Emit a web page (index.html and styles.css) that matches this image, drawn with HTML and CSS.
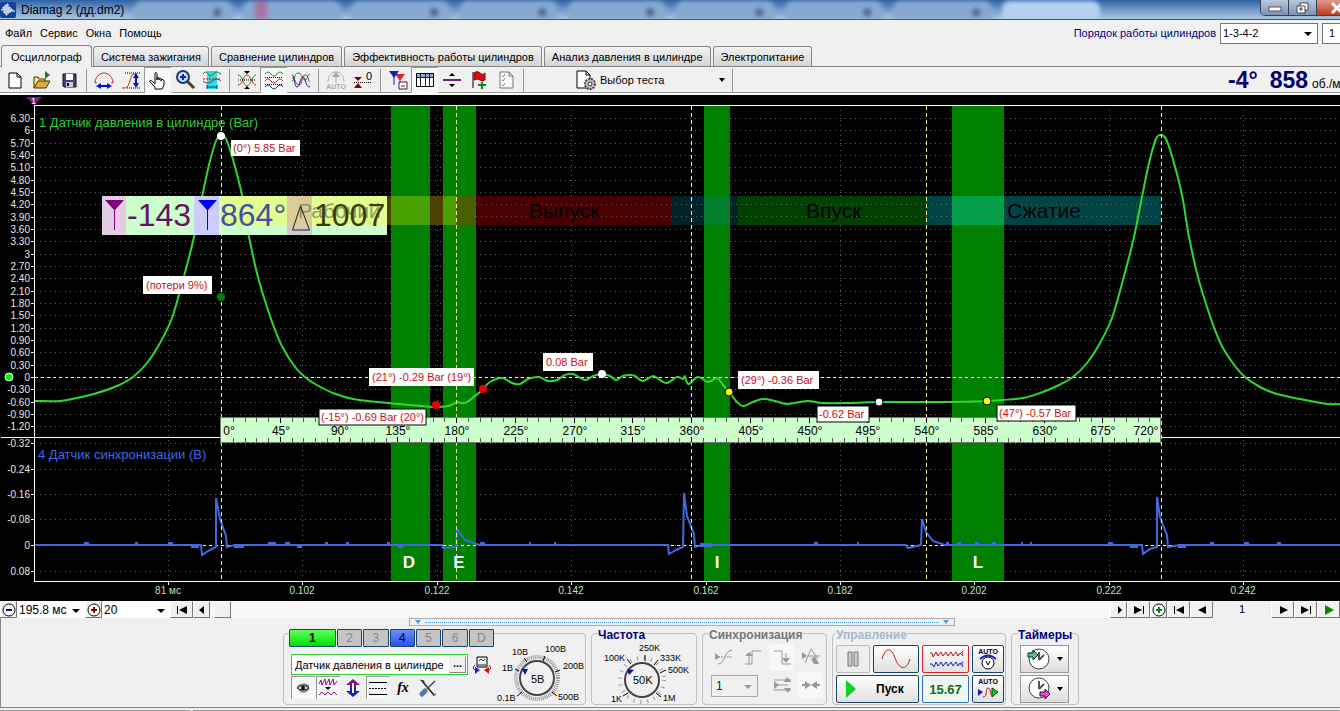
FILE: index.html
```html
<!DOCTYPE html>
<html lang="ru">
<head>
<meta charset="utf-8">
<title>Diamag 2 (дд.dm2)</title>
<link rel="stylesheet" href="styles.css">
</head>
<body>
<header class="titlebar">
  <svg class="app-logo" viewBox="0 0 16 16"><rect width="16" height="16" rx="2" fill="#12409c"/><path d="M1 8h2V5h1v6h1V3h1v10h1V2h1v9h1V5h1v5h1V7h1v2h3" fill="none" stroke="#fff"/></svg>
  <h1>Diamag 2 (дд.dm2)</h1>
  <div class="glass"><i></i><i class="rose"></i><i></i><i></i><i></i><i></i><i></i><i></i><i class="bright"></i></div>
  <div class="win-buttons">
    <button aria-label="Свернуть"><svg viewBox="0 0 14 12"><rect x="1" y="5" width="12" height="4" fill="#fff" stroke="#555"/></svg></button>
    <button aria-label="Развернуть"><svg viewBox="0 0 14 12"><path d="M4 1h8v7H9v3H1V4h3z" fill="#fff" stroke="#445"/><path d="M4 4h5v4M4 6h2v2H4z" fill="none" stroke="#445"/></svg></button>
    <button class="close" aria-label="Закрыть"><svg viewBox="0 0 14 12"><path d="M2 1l10 10M12 1L2 11" stroke="#fff" stroke-width="3"/></svg></button>
  </div>
</header>
<div class="menubar">
  <nav><a href="#">Файл</a><a href="#">Сервис</a><a href="#">Окна</a><a href="#">Помощь</a></nav>
  <div class="order">
    <label for="order">Порядок работы цилиндров</label>
    <span class="combo order-list"><select id="order"><option>1-3-4-2</option></select></span>
    <input class="cyl" value="1" aria-label="Цилиндр">
  </div>
</div>
<div class="tabs" role="tablist">
  <button role="tab" class="active">Осциллограф</button><button role="tab">Система зажигания</button><button role="tab">Сравнение цилиндров</button><button role="tab">Эффективность работы цилиндров</button><button role="tab">Анализ давления в цилиндре</button><button role="tab">Электропитание</button>
</div>
<div class="toolbar">
  <button aria-label="Новый"><svg viewBox="0 0 20 20"><path d="M4 3h8l4 4v11H4zM12 3v4h4" fill="#fff" stroke="#000"/></svg></button>
  <button aria-label="Открыть"><svg viewBox="0 0 20 20"><path d="M2 18V7h4l1 2h6v3" fill="#ffe08a" stroke="#443000"/><path d="M2 18l4-7h12l-4 7z" fill="#d8b040" stroke="#443000"/><path d="M13 1l5 4-5 4z" fill="#0a8a0a"/></svg></button>
  <button aria-label="Сохранить"><svg viewBox="0 0 20 20"><path d="M4 4h13v13H5l-1-1z" fill="#44447c" stroke="#111"/><path d="M7 4h7v6H7z" fill="#fff"/><path d="M7 12h7v5H7z" fill="#ccc"/><path d="M8 13h2v3H8z" fill="#111"/></svg></button>
  <i class="sep"></i>
  <button aria-label="Период"><svg viewBox="0 0 20 20"><path d="M1 13C1 8 5 3 10 3s9 5 9 10h-2M1 13h2" fill="none" stroke="#e02020"/><path d="M4 16h12" stroke="#00c" stroke-width="2"/><path d="M2 16l5-3v6zM18 16l-5-3v6z" fill="#0018c0"/></svg></button>
  <button aria-label="Амплитуда"><svg viewBox="0 0 20 20"><path d="M1 18h3c5 0 5-14 9-14h3" fill="none" stroke="#e02020"/><path d="M4 3h16M6 18h14" stroke="#000" stroke-dasharray="1 1"/><path d="M15 5v11" stroke="#0018c0" stroke-width="2"/><path d="M15 3l-3 5h6zM15 18l-3-5h6z" fill="#0018c0"/></svg></button>
  <button class="on" aria-label="Рука"><svg viewBox="0 0 20 20"><path d="M7 19v-2l-5-5c-1-2 1-2 2-1l3 3V4c0-2 2-2 2 0v6 -2c0-1 2-1 2 0v2-1c0-1 2-1 2 0v2-1c0-1 3-1 3 1v4l-2 4z" fill="#fff" stroke="#000"/></svg></button>
  <button aria-label="Лупа"><svg viewBox="0 0 20 20"><path d="M12 11l7 7" stroke="#543c20" stroke-width="3"/><circle cx="8" cy="7" r="6" fill="#cdf" stroke="#223868" stroke-width="2"/><path d="M8 4v6M5 7h6" stroke="#0020d0" stroke-width="2"/></svg></button>
  <button aria-label="Участок"><svg viewBox="0 0 20 20"><path d="M5 1h10v18H5z" fill="#28dce8"/><path d="M1 4q3-4 5 0t5 0 8 0" fill="none" stroke="#088020"/><path d="M1 9h18" stroke="#d01010" stroke-dasharray="2 1"/><path d="M1 11q4 4 9 0t9 0" fill="none" stroke="#803030"/><path d="M5 17h10M5 15v4M15 15v4" stroke="#004090"/></svg></button>
  <i class="sep"></i>
  <button aria-label="Совместить"><svg viewBox="0 0 20 20"><path d="M1 5c5 0 5 11 9 11s5-11 9-11" fill="none" stroke="#109010"/><path d="M1 15c5 0 5-10 9-10s5 10 9 10" fill="none" stroke="#d02020"/><path d="M1 10h18" stroke="#000" stroke-dasharray="1 1"/><path d="M10 4L7 1h6zM10 16l-3 3h6z"/></svg></button>
  <button class="on" aria-label="Разделить"><svg viewBox="0 0 20 20"><path d="M1 4q3-4 6 0t6 0 6 0" fill="none" stroke="#109010"/><path d="M1 11q3-4 6 0t6 0 6 0" fill="none" stroke="#d02020"/><path d="M1 17q3-4 6 0t6 0 6 0" fill="none" stroke="#1020c0"/><path d="M1 7.500h18M1 14.500h18" stroke="#000" stroke-dasharray="1 1"/></svg></button>
  <button aria-label="Наложить"><svg viewBox="0 0 20 20"><path d="M1 11c3 0 2-8 6-8s4 7 7 7 2-6 5-6" fill="none" stroke="#109010"/><path d="M1 8c4 0 3 7 7 7s2-10 6-10 3 7 5 7" fill="none" stroke="#d02020"/><path d="M1 5c3 0 2 12 5 12S9 7 12 7s2 10 7 10" fill="none" stroke="#1020c0"/></svg></button>
  <i class="sep"></i>
  <button disabled aria-label="Авто"><svg viewBox="0 0 20 20"><path d="M2 12C2 5 6 2 10 2s8 3 8 10M10 13V5" fill="none" stroke="#aaa"/><path d="M10 2L6 7h8z" fill="#aaa"/><text x="10" y="19" class="tiny gray">AUTO</text></svg></button>
  <button aria-label="Ноль"><svg viewBox="0 0 20 20"><path d="M1 12.500h18" stroke="#000" stroke-dasharray="1 1"/><path d="M1 7h8l-4 4zM1 18h8l-4-5z" fill="#800000"/><text x="16" y="10" class="small">0</text></svg></button>
  <i class="sep"></i>
  <button aria-label="Маркеры"><svg viewBox="0 0 20 20"><path d="M7 4h10l-5 7z" fill="#d03030"/><path d="M12 10v6" stroke="#d03030"/><path d="M1 1h10L6 8z" fill="#1020c0"/><path d="M6 7v8" stroke="#1020c0"/><path d="M11 12h8v7h-8z" fill="#fff" stroke="#423"/><path d="M13 16h4" stroke="#423"/></svg></button>
  <button class="on" aria-label="Таблица"><svg viewBox="0 0 20 20"><path d="M1.500 3.500h17v13h-17z" fill="#fff" stroke="#000"/><path d="M2 4h16v3H2z" fill="#8aa8d8"/><path d="M2 7.500h16M5.500 4v12M10.500 4v12M14.500 4v12" stroke="#123"/></svg></button>
  <button aria-label="Линия"><svg viewBox="0 0 20 20"><path d="M1 10h18" stroke="#702080" stroke-width="2"/><path d="M7 6l3-3 3 3zM7 14h6l-3 3z"/></svg></button>
  <button aria-label="Флаг"><svg viewBox="0 0 20 20"><path d="M4 2v16" stroke="#000"/><path d="M5 3q3-3 6 0t5 0v7q-3 2-5 0t-6 0z" fill="#d80c18" stroke="#800"/><path d="M13 12v7M9 15h8" stroke="#088a10" stroke-width="2"/></svg></button>
  <button aria-label="Список"><svg viewBox="0 0 20 20"><path d="M4 2h9l4 4v12H4zM13 2v4h4" fill="#f8f8f8" stroke="#777"/><path d="M6 6l1 1 2-3M6 10l1 1 2-3M6 15l1 1 2-3" fill="none" stroke="#888"/></svg></button>
  <i class="sep"></i>
  <button class="test"><svg viewBox="0 0 20 20"><path d="M1 1h9l4 4v13H1zM10 1v4h4" fill="#fff" stroke="#000"/><circle cx="14" cy="14" r="5" fill="#ccc" stroke="#444" stroke-width="2" stroke-dasharray="2 1"/><circle cx="14" cy="14" r="2" fill="#fff" stroke="#222"/></svg><span>Выбор теста</span><b class="down"></b></button>
  <i class="sep"></i>
  <output class="readout"><b>-4°</b><b>858</b><span>об./м</span></output>
</div>
<main class="scope">
<svg id="chart" viewBox="0 95 1340 506" role="img" aria-label="Осциллограмма">
  <rect y="95" width="1340" height="506"/>
  <g id="grid" class="grid"></g>
  <g fill="#008000"><path d="M391 106h39v475h-39zM443 106h33v475h-33zM704 106h26v475h-26zM952 106h52v475h-52z"/></g>
  <g>
    <path d="M387 196h69v29h-69z" fill="#4a4000"/><path d="M391 196h39v29h-39zM443 196h13v29h-13z" fill="#48a000"/>
    <path d="M456 196h20v29h-20z" fill="#4a6000"/><path d="M476 196h195v29H476z" fill="#480000"/>
    <path d="M671 196h67v29h-67z" fill="#002228"/><path d="M704 196h26v29h-26z" fill="#00802a"/>
    <path d="M738 196h188v29H738z" fill="#004000"/><path d="M926 196h235v29H926z" fill="#004444"/><path d="M952 196h52v29h-52z" fill="#00a048"/>
  </g>
  <g id="grid2" class="grid"></g>
  <g class="stroke-name"><text x="529" y="218">Выпуск</text><text x="806" y="218">Впуск</text><text x="1007" y="218">Сжатие</text></g>
  <path d="M35 377.500H1340M35 545.500H1340" stroke="#fff" stroke-dasharray="3 3"/>
  <path d="M34 105.500H1340M34.500 105V582M34 581.500H1340M1 437.500H1340" stroke="#fff"/>
  <g id="axes" class="axis"></g>
  <path id="pressure" class="pressure"/>
  <path class="sync" d="M35 545H201L202 555 208 551 216 547V498L220 519 226 536 227 547 235 545 442 545 443 548 456 547 457 529 465 540 476 544 480 545 668 545 669 554 676 550 683 547 684 493 687 516 694 534 695 547 702 545H906L908 548 921 545 922 519 926 532 933 541 945 545H1142L1143 554 1150 549 1157 547V497L1160 517 1167 535 1168 547 1180 545H1340"/>
  <path class="noise" d="M84 544h5M135 544h3M168 544h5M191 546h8M234 546h10M268 544h8M285 544h5M297 546h5M325 544h3M346 544h3M387 544h3M398 546h5M480 544h5M529 544h2M554 544h2M700 545h12M814 544h4M857 544h2M946 544h3M957 544h4M975 544h4M992 544h4M1021 544h2M1030 544h2M1108 544h5M1130 546h8M1178 546h8M1210 544h4M1244 544h5M1277 544h4"/>
  <path d="M221.500 106V581M456.500 106V581M691.500 106V581M926.500 106V581M1161.500 106V581" stroke="#f4f490" stroke-dasharray="4 3"/>
  <path d="M26 97h16l-8 8z" fill="#702080"/><text x="31" y="104" fill="#fff" font-size="9">1</text>
  <text class="channel" x="39" y="127" fill="#32cd32">1 Датчик давления в цилиндре (Bar)</text>
  <text class="channel" x="38" y="459" fill="#4169e1">4 Датчик синхронизации (В)</text>
  <g id="ruler" class="ruler"></g>
  <g class="zone"><text x="409" y="568">D</text><text x="459" y="568">E</text><text x="717" y="568">I</text><text x="978" y="568">L</text></g>
  <g>
    <path d="M102 196h285v39H102z" fill="#cfc"/><path d="M102 196h24v39h-24z" fill="#e4cce4"/><path d="M194 196h25v39h-25z" fill="#ccf"/>
    <path d="M221 196h166v29H221z" fill="#e2ff90"/><path d="M287 196h25v29h-25z" fill="#dccb94"/><path d="M287 225h25v10h-25z" fill="#ccc"/>
    <text x="298" y="218" font-size="21" fill="#8a9a70">Рабочий</text>
    <path d="M105 200h19l-9 10v20h-1v-20z" fill="#800080"/><path d="M198 200h19l-9 10v20h-1v-20z" fill="#0000f8"/>
    <path d="M300.500 206l-8 24h17z" fill="none" stroke="#221"/>
    <g font-size="32"><text x="127" y="226" fill="#641464">-143</text><text x="220" y="226" fill="#4450a4">864°</text><text x="314" y="226" fill="#3c3c00">1007</text></g>
  </g>
  <g>
    <circle cx="221" cy="136" r="4" fill="#fff"/><circle cx="221" cy="297" r="4" fill="#008000"/><circle cx="9" cy="377" r="4" fill="#0f0" stroke="#fff"/>
    <circle cx="436" cy="405" r="4" fill="#e00"/><circle cx="483" cy="389" r="4" fill="#e00"/><circle cx="602" cy="374" r="4" fill="#fff"/>
    <circle cx="729" cy="392" r="4" fill="#ff0" stroke="#000"/><circle cx="879" cy="402" r="4" fill="#fff" stroke="#000"/><circle cx="987" cy="401" r="4" fill="#ff0" stroke="#000"/>
  </g>
  <g class="tips">
    <rect x="231" y="140" width="69" height="16"/><text x="233" y="152">(0°) 5.85 Bar</text>
    <rect x="143" y="276" width="69" height="18"/><text x="146" y="289">(потери 9%)</text>
    <rect x="369" y="368" width="105" height="18"/><text x="372" y="381">(21°) -0.29 Bar (19°)</text>
    <rect x="319" y="409" width="107" height="16" stroke="#000"/><text x="321" y="421">(-15°) -0.69 Bar (20°)</text>
    <rect x="543" y="353" width="50" height="18"/><text x="546" y="366">0.08 Bar</text>
    <rect x="738" y="371" width="81" height="18"/><text x="741" y="384">(29°) -0.36 Bar</text>
    <rect x="817" y="406" width="52" height="16" stroke="#000"/><text x="819" y="418">-0.62 Bar</text>
    <rect x="997" y="405" width="79" height="16" stroke="#000"/><text x="999" y="417">(47°) -0.57 Bar</text>
  </g>
</svg>
</main>
<div class="navbar">
  <button class="sq" aria-label="Меньше"><svg viewBox="0 0 14 14"><circle cx="7" cy="7" r="6" fill="#fff" stroke="#000"/><path d="M4 7h6" stroke="#000090" stroke-width="2"/></svg></button>
  <span class="combo span-list"><select aria-label="Развёртка"><option>195.8 мс</option></select></span>
  <button class="sq" aria-label="Больше"><svg viewBox="0 0 14 14"><circle cx="7" cy="7" r="6" fill="#fff" stroke="#000"/><path d="M4 7h6M7 4v6" stroke="#900000" stroke-width="2"/></svg></button>
  <span class="combo span-list"><select aria-label="Масштаб"><option>20</option></select></span>
  <button class="wide" aria-label="В начало"><svg viewBox="0 0 14 14"><path d="M2 3h1v8H2zM12 3v8L4 7z"/></svg></button>
  <button class="sq" aria-label="Назад"><svg viewBox="0 0 14 14"><path d="M9 3v8L4 7z"/></svg></button>
  <button class="sq thumb" aria-label="Прокрутка"></button>
  <span class="grow"></span>
  <button class="sq" aria-label="Вперёд"><svg viewBox="0 0 14 14"><path d="M6 3v8l4-4z"/></svg></button>
  <button class="wide" aria-label="В конец"><svg viewBox="0 0 14 14"><path d="M11 3h1v8h-1zM2 3v8l8-4z"/></svg></button>
  <button class="sq" aria-label="Добавить"><svg viewBox="0 0 14 14"><circle cx="7" cy="7" r="6" fill="#fff" stroke="#000"/><path d="M4 7h6M7 4v6" stroke="#080" stroke-width="2"/></svg></button>
  <button class="wide" aria-label="Первый кадр"><svg viewBox="0 0 14 14"><path d="M2 3h1v8H2zM12 3v8L4 7z"/></svg></button>
  <button class="wide" aria-label="Предыдущий кадр"><svg viewBox="0 0 14 14"><path d="M11 3v8L3 7z"/></svg></button>
  <output class="frame">1</output>
  <button class="wide" aria-label="Следующий кадр"><svg viewBox="0 0 14 14"><path d="M4 3v8l8-4z"/></svg></button>
  <button class="wide" aria-label="Последний кадр"><svg viewBox="0 0 14 14"><path d="M11 3h1v8h-1zM2 3v8l8-4z"/></svg></button>
  <button class="wide" aria-label="Воспроизвести"><svg viewBox="0 0 14 14"><path d="M3 2v10l9-5z" fill="#008a00"/></svg></button>
</div>
<section class="deck">
  <div class="splitter"><i class="blue-down"></i><hr><i class="blue-down"></i></div>
  <div class="groups">
    <div class="group channels" role="group" aria-label="Каналы">
      <div class="chan-left">
        <div class="chan-row"><button class="c1">1</button><button>2</button><button>3</button><button class="c4">4</button><button>5</button><button>6</button><button>D</button></div>
        <div class="sensor-row">
          <span class="sensor"><input value="Датчик давления в цилиндре" aria-label="Датчик"><button>...</button></span>
          <svg class="swap" viewBox="0 0 20 20"><path d="M5 2h10v10H5z" fill="#eee" stroke="#000"/><path d="M6 9h8v2H6z" fill="#888"/><path d="M7 6l2-2 2 2 2-2" fill="none" stroke="#444"/><path d="M3 10q-4 4 1 5" fill="none" stroke="#1020b0"/><path d="M17 10q4 4-1 5" fill="none" stroke="#c00"/><path d="M3 12l5 3-5 4z" fill="#1020b0"/><path d="M17 12l-5 3 5 4z" fill="#d01010"/></svg>
        </div>
        <div class="tool-row">
          <button class="on" aria-label="Показать"><svg viewBox="0 0 20 20"><path d="M4 8q6-5 12-1v5q-5 5-10 1z" fill="#888"/><path d="M4 10q6-5 12 0-6 4-12 0z" fill="#eee" stroke="#222"/><circle cx="10" cy="10" r="2"/></svg></button>
          <button class="on" aria-label="Фильтр"><svg viewBox="0 0 20 20"><path d="M1 6l2-4 1 5 3-6 1 6 3-6 1 6 3-6 1 6 3-4" fill="none" stroke="#801080"/><path d="M7 9h6l-3 3z"/><path d="M1 17l3-3 3 3 3-3 3 3 3-3 3 3" fill="none" stroke="#801080"/></svg></button>
          <button aria-label="Смещение"><svg viewBox="0 0 20 20"><path d="M10 1l7 6h-4v3H7V7H3z" fill="#801080"/><path d="M10 19l7-6h-4v-3H7v3H3z" fill="#1020c0"/><path d="M10 5v10" stroke="#fff" stroke-width="2"/></svg></button>
          <button class="on" aria-label="Уровни"><svg viewBox="0 0 20 20"><path d="M1 4.500h18M1 16.500h18" stroke="#000"/><path d="M1 10.500h18" stroke="#000" stroke-dasharray="2 1"/></svg></button>
          <button class="fx">fx</button>
          <button aria-label="Настройка"><svg viewBox="0 0 20 20"><path d="M4 3l12 14" stroke="#222" stroke-width="1.500"/><path d="M17 3L9 11" stroke="#444" stroke-width="1.500"/><path d="M4 16l3-3" stroke="#5078b0" stroke-width="5" stroke-linecap="round"/><path d="M2 2l4 1v3M18 16l-3 2" fill="none" stroke="#333"/></svg></button>
        </div>
      </div>
      <svg class="knob" viewBox="494 637 92 66">
        <circle cx="537" cy="678" r="21" class="scale"/><circle cx="537" cy="678" r="17" class="dial"/>
        <path d="M527 662l-3-4M543 661l2-5M555 672l5-2M552 692l5 4M522 692l-5 4M519 671l-4-2" stroke="#000"/><path d="M522 669h6l-3 6z" fill="#1010b0"/>
        <g class="marks"><text x="497" y="701">0.1B</text><text x="502" y="671">1B</text><text x="512" y="655">10B</text><text x="545" y="652">100B</text><text x="563" y="669">200B</text><text x="558" y="700">500B</text></g>
        <text x="531" y="683" class="value">5B</text>
      </svg>
    </div>
    <div class="group" role="group" aria-labelledby="g2"><h2 id="g2">Частота</h2>
      <svg class="knob freq" viewBox="596 641 94 62">
        <circle cx="641" cy="679" r="22" class="scale sparse"/><circle cx="641" cy="679" r="17" class="dial"/>
        <path d="M630 663l-4-5M644 660v-6M653 664l4-5M659 672l6-3M655 692l5 4M627 692l-5 3" stroke="#000"/><path d="M626 668l7 1-5 5z" fill="#1010b0"/>
        <g class="marks"><text x="610" y="701">1K</text><text x="603" y="660">100K</text><text x="638" y="650">250K</text><text x="659" y="660">333K</text><text x="667" y="672">500K</text><text x="662" y="700">1M</text></g>
        <text x="632" y="683" class="value">50K</text>
      </svg>
    </div>
    <div class="group sync-group" role="group" aria-labelledby="g3"><h2 id="g3" class="dim">Синхронизация</h2>
      <div class="sync-grid">
        <button disabled aria-label="Уровень"><svg viewBox="0 0 20 20"><path d="M1 6v7l5-3z" fill="#999"/><path d="M1 10h18" stroke="#999" stroke-dasharray="2 1"/><path d="M4 17c8 0 5-13 14-14" fill="none" stroke="#999"/></svg></button>
        <button disabled aria-label="Фронт"><svg viewBox="0 0 20 20"><path d="M2 17h7V4h9" fill="none" stroke="#999"/><path d="M6 17V8" stroke="#999"/><path d="M2 9h8L6 5z" fill="#999"/></svg></button>
        <button class="on" disabled aria-label="Спад"><svg viewBox="0 0 20 20"><path d="M2 4h8v13h9M14 6v8" fill="none" stroke="#999"/><path d="M10 11h8l-4 5z" fill="#999"/></svg></button>
        <button disabled aria-label="Захват"><svg viewBox="0 0 20 20"><path d="M1 5v7l5-3z" fill="#999"/><path d="M4 16L10 2l7 10M7 9h12" fill="none" stroke="#999"/><path d="M10 12l4-3 4 8h-5z" fill="#999"/></svg></button>
        <span class="combo sync-list"><select disabled aria-label="Канал"><option>1</option></select></span>
        <button disabled aria-label="Зона"><svg viewBox="0 0 20 20"><path d="M2 6v8l5-4zM12 7l3-5 4 5zM12 13h7l-3 5z" fill="#999"/><path d="M2 5h17M6 10h10M2 15h17" stroke="#999"/></svg></button>
        <button class="on" disabled aria-label="Сжать"><svg viewBox="0 0 20 20"><path d="M1 10h5M14 10h5" stroke="#999" stroke-width="2"/><path d="M4 6v8l6-4zM16 6v8l-6-4z" fill="#999"/></svg></button>
      </div>
    </div>
    <div class="group control" role="group" aria-labelledby="g4"><h2 id="g4" class="pale">Управление</h2>
      <div class="ctl-grid">
        <button class="flat" disabled aria-label="Пауза"><svg viewBox="0 0 20 20"><path d="M5 3h4v14H5zM11 3h4v14h-4z" fill="#ccc" stroke="#777"/></svg></button>
        <button aria-label="Синус"><svg class="wideicon" viewBox="0 0 34 20"><path d="M3 10C7-2 12-2 16 9s11 14 15 1" fill="none" stroke="#c01010"/></svg></button>
        <button class="red" aria-label="Сравнение"><svg class="wideicon" viewBox="0 0 34 20"><path d="M1 4h2l1 4 3-5 2 4 3-4 2 4 3-4 2 4 3-4 2 4 3-4 2 4 2-3 3 3V2l-3 3" fill="none" stroke="#c01010"/><path d="M1 15h2l2 3 2-5 2 4 3-4 2 4 3-4 2 4 3-4 2 4 3-4 2 4 2-3 3 4V13l-3 2" fill="none" stroke="#1020c0"/></svg></button>
        <button aria-label="Автонастройка"><svg class="tall" viewBox="0 0 24 24"><text x="12" y="7" class="tiny">AUTO</text><path d="M4 12q8-7 16 0" fill="none" stroke="#1020c0" stroke-width="2"/><circle cx="12" cy="16" r="6" fill="#fff" stroke="#000"/><path d="M10 14l2 4 2-4" fill="none" stroke="#000"/></svg></button>
        <button class="start"><svg viewBox="0 0 20 20"><path d="M4 1v18l10-9z" fill="#10d020"/></svg>Пуск</button>
        <button class="rate">15.67</button>
        <button aria-label="Автопуск"><svg class="tall" viewBox="0 0 24 24"><text x="12" y="7" class="tiny">AUTO</text><path d="M2 12v7l5-4z" fill="#1020c0"/><path d="M7 20c5 0 2-9 5-9s2 8 5 8" fill="none" stroke="#c01010"/><path d="M16 11v9l6-5z" fill="#2c2" stroke="#040"/></svg></button>
      </div>
    </div>
    <div class="group timers" role="group" aria-labelledby="g5"><h2 id="g5">Таймеры</h2>
      <button aria-label="Таймер пуска"><svg viewBox="0 0 24 24"><circle cx="12" cy="12" r="10" fill="#fff" stroke="#444"/><path d="M12 13V5M12 13l5-5" stroke="#555" stroke-width="2"/><path d="M1 6h5V3l5 5-5 5v-3H1z" fill="#60b8a8" stroke="#033"/></svg><b class="down"></b></button>
      <button aria-label="Таймер остановки"><svg viewBox="0 0 24 24"><circle cx="12" cy="11" r="10" fill="#fff" stroke="#444"/><path d="M12 12V4M12 12l5-5" stroke="#555" stroke-width="2"/><path d="M13 15h5v-3l5 5-5 5v-3h-5z" fill="#f050d0" stroke="#303"/></svg><b class="down"></b></button>
    </div>
  </div>
</section>
<footer class="status"><span class="cell"></span><span class="cell rest"></span></footer>
<script src="chart.js"></script>
</body>
</html>
```
FILE: styles.css
```css
* { box-sizing: border-box; }
body { margin: 0; background: #f0f0f0; color: #000; font: 11px "Liberation Sans", Arial, sans-serif; overflow: hidden; }
button, input, select { font: inherit; color: inherit; margin: 0; padding: 0; border: 0; background: none; }
button { display: flex; align-items: center; justify-content: center; }
h1, h2 { margin: 0; font-size: 12px; }
svg { display: block; flex: none; }

.titlebar { display: flex; align-items: center; height: 20px; overflow: hidden; border-bottom: 1px solid #4a5666; background: linear-gradient(#2f62a4, #7ea3cd 60%, #a9c3e0); }
.app-logo { width: 16px; height: 16px; margin-right: 5px; }
.titlebar h1 { font-weight: 400; white-space: nowrap; padding-right: 10px; }
.glass { display: flex; flex: 1; gap: 10px; height: 20px; filter: blur(2px); }
.glass i { flex: 1; background: radial-gradient(circle at 84% 60%, #47658c 3px, transparent 5px), #86a9d2; border-radius: 8px 8px 0 0; margin-top: 1px; }
.glass .rose { background: linear-gradient(90deg, transparent 10px, #a872a4 14px 22px, transparent 26px), #86a9d2; }
.glass .bright { background: #b4d2f0; margin-right: 160px; }
.win-buttons { display: flex; align-self: flex-start; height: 16px; margin-right: -18px; border: 1px solid #33455e; border-top: 0; border-radius: 0 0 5px 5px; overflow: hidden; }
.win-buttons button { width: 28px; background: linear-gradient(#b9c8db, #7b93b2); border-right: 1px solid #33455e; }
.win-buttons .close { width: 40px; background: linear-gradient(#e09a88, #c03a20); }
.win-buttons svg { width: 14px; height: 12px; }

.menubar { display: flex; justify-content: space-between; height: 26px; }
.menubar nav { display: flex; align-items: center; gap: 8px; padding-left: 5px; }
.menubar a { color: #000; text-decoration: none; }
.order { display: flex; align-items: center; gap: 4px; color: #000080; }
.combo { position: relative; display: flex; background: #fff; color: #000; font-size: 12px; }
.combo select { appearance: none; width: 100%; padding-left: 2px; }
.combo::after, .down { content: ""; width: 0; height: 0; border: 4px solid transparent; border-top-color: #000; border-bottom: 0; }
.combo::after { position: absolute; right: 5px; top: 50%; margin-top: -1px; pointer-events: none; }
.order-list { width: 98px; height: 21px; border: 1px solid #777; font-size: 11px; }
.cyl { width: 18px; height: 21px; border: 1px solid #777; border-right: 0; background: #fff; color: #000; padding-left: 6px; }

.tabs { display: flex; gap: 2px; height: 21px; padding-left: 1px; border-bottom: 1px solid #888; }
.tabs button { height: 20px; padding: 0 7px; border: 1px solid #888; border-bottom: 0; border-radius: 3px 3px 0 0; background: linear-gradient(#f2f2f2, #d4d4d4); white-space: nowrap; }
.tabs .active { height: 22px; margin: -1px -1px 0 0; padding: 0 9px; background: #f0f0f0; }

.toolbar { display: flex; align-items: center; height: 28px; padding-left: 1px; border-bottom: 2px solid #fff; box-shadow: inset 0 -1px #999; overflow: hidden; }
.toolbar button { flex: none; width: 27px; height: 26px; }
.toolbar svg { width: 20px; height: 20px; }
.on { background: repeating-conic-gradient(#fff 0 25%, #f0f0f0 0 50%) 0 0 / 2px 2px; box-shadow: inset 1px 1px #999; }
.sep { flex: none; width: 8px; height: 23px; background: linear-gradient(#999, #999) 4px 0 / 1px 100% no-repeat; }
.toolbar .test { width: 201px; padding: 0 3px 0 49px; gap: 4px; }
.test .down { margin-left: auto; }
.down { border-width: 3px; border-top-width: 4px; }
.readout { display: flex; align-items: baseline; gap: 12px; margin-left: auto; width: 112px; color: #000070; font-size: 23px; white-space: nowrap; }
.readout span { font-size: 12px; color: #000; margin-left: -8px; }
.tiny { font-size: 7px; font-weight: 700; text-anchor: middle; }
.gray { fill: #aaa; }
.small { font-size: 11px; text-anchor: middle; }

.scope { background: #000; }
#chart { width: 100%; height: auto; }
.grid path { stroke: #606060; stroke-dasharray: 1 4; }
.axis { fill: #e8e8e8; font-size: 10px; }
.axis path { stroke: #fff; }
.axis .y { text-anchor: end; }
.axis .x { text-anchor: middle; fill: #b8e8b8; }
.stroke-name { font-size: 21px; }
.pressure { fill: none; stroke: #2fd82f; stroke-width: 2; stroke-linejoin: round; }
.sync { fill: none; stroke: #4169e1; stroke-width: 2; }
.noise { stroke: #4169e1; stroke-width: 4; }
.channel { font-size: 13px; }
.ruler text { font-size: 12px; text-anchor: middle; }
.zone { fill: #fff; font-size: 17px; font-weight: 700; text-anchor: middle; }
.tips { font-size: 11px; fill: #c81010; }
.tips rect { fill: #fff; }

.navbar { display: flex; height: 17px; background: #f8f8f8; }
.navbar button { background: #f0f0f0; border: 1px solid; border-color: #fff #777 #777 #fff; }
.navbar svg { width: 14px; height: 14px; }
.sq { width: 17px; }
.wide { width: 23px; }
.thumb { margin-left: 4px; }
.span-list { width: 68px; }
.grow { flex: 1; }
.frame { width: 58px; text-align: center; background: #f0f0f0; line-height: 17px; }

.deck { box-shadow: inset 1px 0 #888; border-bottom: 1px solid #888; padding-left: 24px; }
.splitter { display: flex; align-items: center; gap: 4px; width: 546px; height: 8px; margin: 0 auto; padding: 0 5px; border: 1px solid #aab; }
.splitter hr { flex: 1; margin: 0; border: 0; border-top: 1px dotted #48a0e0; }
.blue-down { border: 3px solid transparent; border-top: 4px solid #48a0e0; border-bottom: 0; }
.groups { display: flex; justify-content: center; gap: 5px; padding: 7px 2px 2px 0; }
.group { height: 72px; border: 1px solid #c0c0c0; border-radius: 4px; padding: 0 3px; }
.group h2 { width: max-content; margin: -6px 0 0 3px; line-height: 14px; background: #f0f0f0; color: #000080; }
.group .dim { color: #777; }
.group .pale { color: #a4b8cc; margin-left: 0; }
.channels { display: flex; width: 303px; padding: 0 0 0 5px; }
.chan-left { width: 205px; }
.chan-row { display: flex; gap: 1px; margin-top: -5px; font-size: 12px; }
.chan-row button { width: 26px; height: 18px; border: 1px solid #1c4468; background: #c4c4c4; color: #888; border-radius: 1px; }
.chan-row .c1 { width: 48px; background: linear-gradient(#60ff60, #00e000); color: #000; font-weight: 700; }
.chan-row .c4 { background: linear-gradient(#6a90ff, #2850f0); color: #000; }
.sensor-row { display: flex; align-items: center; gap: 4px; margin: 7px 0 1px 2px; }
.sensor { display: flex; width: 177px; height: 21px; border: 1px solid #3c3; background: #fff; padding: 1px; }
.sensor input { flex: 1; min-width: 0; padding-left: 2px; }
.sensor button { width: 17px; background: #f0f0f0; border: 1px solid; border-color: #eee #888 #888 #eee; font-weight: 700; line-height: 8px; padding-bottom: 4px; }
.swap { width: 20px; height: 20px; }
.tool-row { display: flex; gap: 1px; margin-left: 2px; }
.tool-row button { width: 24px; height: 23px; }
.tool-row svg, .sync-grid svg, .ctl-grid svg { width: 20px; height: 20px; }
.tool-row .fx { font: italic bold 14px "Liberation Serif", serif; }
.knob { width: 92px; height: 66px; margin-top: 3px; }
.channels .knob { margin-left: auto; }
.knob.freq { width: 94px; height: 62px; margin: 0 2px; }
.scale { fill: none; stroke: #999; stroke-width: 4; stroke-dasharray: 1 1; }
.sparse { stroke-dasharray: 1 6; }
.dial { fill: #f0f0f0; stroke: #444; stroke-width: 2; }
.marks { font-size: 9px; }
.value { font-size: 11px; }
.group.sync-group { width: 125px; }
.sync-grid { display: grid; grid-template-columns: repeat(4, 25px); gap: 2px 4px; margin-left: 5px; padding-top: 2px; }
.sync-grid button { width: 25px; height: 26px; }
.sync-grid .on { box-shadow: none; }
.sync-list { grid-column: span 2; width: 47px; height: 22px; margin-top: 3px; border: 1px solid #aaa; background: #f0f0f0; }
.sync-list select { color: #222; padding-left: 4px; opacity: 1; }
.sync-list::after { border-top-color: #999; }
.group.control { width: 174px; }
.ctl-grid { display: grid; grid-template-columns: 34px 46px 47px 32px; gap: 2px 3px; padding-top: 3px; }
.ctl-grid button { height: 28px; border: 1px solid #1c4468; border-radius: 2px; background: linear-gradient(#fff, #e0e0e0); }
.ctl-grid .flat { border-color: #bbb; background: #eee; }
.ctl-grid .red { border-color: #e02020; }
.ctl-grid svg.wideicon { width: 34px; }
.ctl-grid svg.tall { width: 24px; height: 24px; }
.ctl-grid .start { grid-column: span 2; justify-content: flex-start; gap: 14px; padding-left: 5px; font-size: 12px; font-weight: 700; }
.ctl-grid .rate { color: #107010; font-size: 13px; font-weight: 700; background: #eef6f2; border-color: #3070b0; }
.timers { width: 68px; }
.timers button { width: 49px; height: 28px; gap: 6px; margin: 2px auto 0 5px; border: 1px solid #999; background: linear-gradient(#fff, #ddd); }
.timers h2 + button { margin-top: 3px; }
.timers svg { width: 24px; height: 24px; }

.status { display: flex; gap: 3px; padding-top: 2px; }
.cell { width: 190px; height: 4px; border-top: 1px solid #999; border-right: 1px solid #ccc; }
.rest { flex: 1; border-left: 1px solid #999; }
```
FILE: chart.js
```js
const NS = "http://www.w3.org/2000/svg";
function add(parent, tag, attrs, text) {
  const el = document.createElementNS(NS, tag);
  for (const k in attrs) el.setAttribute(k, attrs[k]);
  if (text !== undefined) el.textContent = text;
  document.getElementById(parent).appendChild(el);
}

const yMarks = [];
for (let i = 21; i >= -4; i--) {
  const v = i * 0.3;
  yMarks.push([Math.round(377 - i * 12.33), i % 10 === 0 ? String(Math.round(v)) : v.toFixed(2)]);
}
[["-0.32", 443], ["-0.24", 469], ["-0.16", 494], ["-0.08", 519], ["0", 545], ["0.08", 571]]
  .forEach(([t, y]) => yMarks.push([y, t]));
for (const [y, t] of yMarks) {
  const label = t === "6.00" ? "6" : t;
  add("grid", "path", { d: `M40 ${y}.5H1340` });
  add("axes", "path", { d: `M31 ${y}.5H34` });
  add("axes", "text", { x: 30, y: y + 4, class: "y" }, label);
}

["81 мс", "0.102", "0.122", "0.142", "0.162", "0.182", "0.202", "0.222", "0.242"].forEach((t, i) => {
  const x = Math.round(168 + i * 134.4);
  add("grid", "path", { d: `M${x}.5 110V581` });
  add("axes", "path", { d: `M${x}.5 582V585` });
  add("axes", "text", { x: x, y: 594, class: "x" }, t);
});
add("grid2", "path", { d: "M476 204.5H1161M476 216.5H1161" });

add("ruler", "rect", { x: 220.5, y: 417.5, width: 940, height: 25, fill: "#ccffcc", stroke: "#777" });
for (let i = 1; i < 80; i++) {
  const x = Math.round(221 + i * 11.75), n = i % 5 ? 4 : 5;
  add("ruler", "path", { d: `M${x}.5 418v${n}M${x}.5 442v-${n}`, stroke: i % 5 ? "#555" : "#000" });
}
for (let i = 0; i <= 16; i++) {
  const x = i === 0 ? 229 : i === 16 ? 1146 : Math.round(222 + i * 58.75);
  add("ruler", "text", { x: x, y: 435 }, i * 45 + "°");
}

const pts = [
  [35, 401], [60, 401], [77, 398], [97, 393], [117, 386], [133, 377], [147, 363], [160, 343], [172, 318],
  [183, 280], [194, 237], [202, 197], [209, 165], [216, 141], [221, 135], [226, 139], [232, 156], [242, 195],
  [249, 237], [258, 277], [267, 307], [275, 330], [283, 348], [295, 367], [305, 377], [315, 384], [333, 393],
  [353, 399], [377, 402], [400, 404], [433, 407], [448, 406], [457, 402], [462, 403], [467, 402], [480, 392],
  [483, 389], [490, 382], [502, 378], [512, 383], [520, 384], [528, 379], [539, 377], [548, 381], [557, 380],
  [565, 375], [573, 374], [585, 380], [593, 376], [602, 374], [610, 376], [616, 380], [623, 376], [630, 375],
  [635, 376], [643, 381], [653, 376], [660, 380], [667, 383], [677, 377], [683, 379], [685, 376], [686, 380],
  [689, 384], [698, 377], [708, 382], [717, 378], [723, 385], [729, 392], [737, 402], [743, 406], [753, 402],
  [763, 399], [775, 401], [787, 404], [807, 401], [823, 403], [847, 403], [879, 402], [950, 402], [987, 401],
  [1002, 400], [1023, 398], [1040, 393], [1057, 386], [1073, 377], [1087, 363], [1100, 343], [1112, 318],
  [1123, 280], [1134, 237], [1142, 197], [1149, 163], [1156, 139], [1161, 135], [1166, 139], [1172, 156],
  [1182, 195], [1189, 237], [1198, 277], [1207, 307], [1215, 330], [1223, 348], [1235, 366], [1245, 377],
  [1260, 387], [1277, 394], [1300, 399], [1327, 404], [1340, 404]
];
let d = `M${pts[0]}`;
for (let i = 0; i < pts.length - 1; i++) {
  const a = pts[i - 1] || pts[i], b = pts[i], c = pts[i + 1], e = pts[i + 2] || c;
  d += `C${b[0] + (c[0] - a[0]) / 6} ${b[1] + (c[1] - a[1]) / 6} ${c[0] - (e[0] - b[0]) / 6} ${c[1] - (e[1] - b[1]) / 6} ${c}`;
}
document.getElementById("pressure").setAttribute("d", d);
```
